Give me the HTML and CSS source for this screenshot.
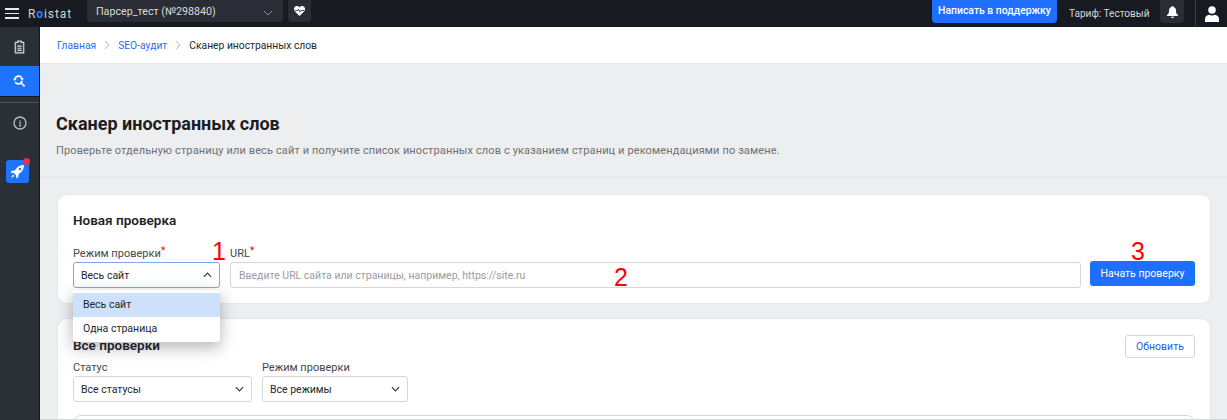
FILE: index.html
```html
<!DOCTYPE html>
<html>
    <head>
        <title>Сканер иностранных слов</title>
        <link rel="stylesheet" href="styles.css">
    </head>
<body>
    <header class="topbar">
        <div class="burger"><span></span><span></span><span></span></div>
        <div class="logo">R<span class="logo-o">o</span>istat</div>
        <div class="project">
            <span>Парсер_тест (№298840)</span>
            <svg class="project-arrow" width="10" height="6" viewBox="0 0 10 6"><path d="M1 1l4 4 4-4" fill="none" stroke="#8b8f96" stroke-width="1"/></svg>
        </div>
        <div class="health">
            <svg width="11" height="10" viewBox="0 0 12 11"><path d="M6 11L1 6C-.5 4.300-.3 1.800 1 .8 2.500-.4 4.800-.2 6 1.600 7.200-.2 9.500-.4 11 .8c1.300 1 1.500 3.500 0 5.200z" fill="#fff"/><path d="M1 5h3l1-1.500L6.500 6.500 7.500 5H11" fill="none" stroke="#2b2f36" stroke-width="1"/></svg>
        </div>
        <div class="topbar-right">
            <div class="support">Написать в поддержку</div>
            <div class="tariff">Тариф: Тестовый</div>
            <div class="bell">
                <svg width="11" height="12" viewBox="0 0 11 12"><path d="M5.500 0C6.200 0 6.500.5 6.500 1 8.500 1.500 9 3 9 5c0 2 .6 3 2 4v1H0V9c1.400-1 2-2 2-4 0-2 .5-3.500 2.500-4 0-.5.300-1 1-1zM4 10.700h3C7 11.500 6.300 12 5.500 12S4 11.500 4 10.700z" fill="#fff"/></svg>
            </div>
            <div class="user">
                <svg width="14" height="16" viewBox="0 0 14 16"><circle cx="7" cy="4" r="3.800" fill="#fff"/><path d="M0 16v-3c0-2.500 2-4 4-4.200 1.800 1 4.200 1 6 0 2 .2 4 1.700 4 4.200v3z" fill="#fff"/></svg>
            </div>
        </div>
    </header>
    <div class="layout">
        <nav class="sidebar">
            <div class="side-item">
                <svg width="11" height="14" viewBox="0 0 13 16"><path d="M4.500 2.500V1h4v1.500h3v12.500h-10V2.500z" fill="#3a3e45" stroke="#d5d7da" stroke-width="1.400"/><path d="M4 7h5M4 9.500h5M4 12h5" stroke="#d5d7da" stroke-width="1.300"/></svg>
            </div>
            <div class="side-item side-active">
                <svg width="13" height="12" viewBox="0 0 15 14"><path d="M2 4.500C2.800 2.500 4.500 1.200 6.500 1.200c1.500 0 2.800.6 3.700 1.700M10.500 7c-.7 2-2.200 3.300-4.200 3.300-1.700 0-3-.7-3.900-1.800" fill="none" stroke="#fff" stroke-width="2"/><path d="M0 4.500h4L2 7zM8.500 3.500h4L10.500 7z" fill="#fff"/><path d="M9.500 9.500l4 3.800" stroke="#fff" stroke-width="1.800"/></svg>
            </div>
            <div class="side-line"></div>
            <div class="side-item">
                <svg width="14" height="14" viewBox="0 0 15 15"><circle cx="7.500" cy="7.500" r="6.400" fill="none" stroke="#b9bbbe" stroke-width="1.500"/><path d="M6.500 7h1.200v3.500M6.300 10.700h2.600M7.500 4.200v1.400" fill="none" stroke="#b9bbbe" stroke-width="1.100"/></svg>
            </div>
            <div class="rocket">
                <svg width="15" height="15" viewBox="0 0 15 15"><path d="M14 1C10 1 7 2.800 5 6.200L1.500 7l-1 1.500 3.200.5 2.300 2.300.5 3.200 1.500-1 .8-3.500C12.200 8 14 5 14 1z" fill="#fff"/><path d="M3 10.500L1 14l3.500-2z" fill="#fff"/><circle cx="10" cy="5" r="1.200" fill="#1f74ff"/></svg>
                <span class="rocket-dot"></span>
            </div>
        </nav>
        <main class="main">
            <div class="crumbs">
                <a>Главная</a>
                <svg class="crumb-sep" width="6" height="10" viewBox="0 0 6 10"><path d="M1 1l4 4-4 4" fill="none" stroke="#b5b8bd"/></svg>
                <a>SEO-аудит</a>
                <svg class="crumb-sep" width="6" height="10" viewBox="0 0 6 10"><path d="M1 1l4 4-4 4" fill="none" stroke="#b5b8bd"/></svg>
                <span>Сканер иностранных слов</span>
            </div>
            <div class="page-head">
                <h1>Сканер иностранных слов</h1>
                <p>Проверьте отдельную страницу или весь сайт и получите список иностранных слов с указанием страниц и рекомендациями по замене.</p>
            </div>
            <section class="card card-new">
                <h2>Новая проверка</h2>
                <div class="form-row">
                    <div class="field field-mode">
                        <label>Режим проверки<i>*</i></label>
                        <div class="select select-open">
                            <span>Весь сайт</span>
                            <svg width="9" height="6" viewBox="0 0 10 6"><path d="M1 5l4-4 4 4" fill="none" stroke="#33373d" stroke-width="1.300"/></svg>
                        </div>
                        <div class="menu">
                            <div class="menu-item menu-current">Весь сайт</div>
                            <div class="menu-item">Одна страница</div>
                        </div>
                        <span class="mark mark-one">1</span>
                    </div>
                    <div class="field field-url">
                        <label>URL<i>*</i></label>
                        <div class="input">Введите URL сайта или страницы, например, https://site.ru</div>
                        <span class="mark mark-two">2</span>
                    </div>
                    <div class="btn-wrap">
                        <div class="btn-primary">Начать проверку</div>
                        <span class="mark mark-three">3</span>
                    </div>
                </div>
            </section>
            <section class="card card-list">
                <div class="list-head">
                    <h2>Все проверки</h2>
                    <div class="btn-outline">Обновить</div>
                </div>
                <div class="filters">
                    <div class="field filter-status">
                        <label>Статус</label>
                        <div class="select">
                            <span>Все статусы</span>
                            <svg width="9" height="6" viewBox="0 0 10 6"><path d="M1 1l4 4 4-4" fill="none" stroke="#33373d" stroke-width="1.300"/></svg>
                        </div>
                    </div>
                    <div class="field filter-mode">
                        <label>Режим проверки</label>
                        <div class="select">
                            <span>Все режимы</span>
                            <svg width="9" height="6" viewBox="0 0 10 6"><path d="M1 1l4 4 4-4" fill="none" stroke="#33373d" stroke-width="1.300"/></svg>
                        </div>
                    </div>
                </div>
                <div class="table-top"></div>
            </section>
        </main>
    </div>
</body>
</html>
```

FILE: styles.css
```css
* { box-sizing: border-box; }

html, body {
    margin: 0;
    height: 420px;
    overflow: hidden;
}

body {
    font-family: Roboto, "Liberation Sans", sans-serif;
    font-size: 10.500px;
    color: #23272d;
    background: #edeef0;
}

.topbar {
    height: 27px;
    background: #171a21;
    display: flex;
    align-items: center;
    color: #fff;
}

.burger {
    width: 14px;
    margin-left: 5px;
    display: flex;
    flex-direction: column;
    gap: 3px;
}

.burger span {
    height: 1.500px;
    background: #e8e9eb;
}

.logo {
    margin-left: 9px;
    width: 44px;
    font-size: 12px;
    letter-spacing: .9px;
    color: #d0d2d5;
}

.logo-o { color: #2a82f5; font-weight: 700; }

.project {
    width: 196px;
    height: 22px;
    margin: 0 0 5px 15px;
    padding: 5px 10px 0 9px;
    background: #2a2d35;
    border-radius: 0 0 4px 4px;
    display: flex;
    justify-content: space-between;
    font-size: 10.700px;
    color: #d9dadc;
}

.project-arrow { margin-top: 5px; }

.health {
    width: 23px;
    height: 22px;
    margin: 0 0 5px 5px;
    background: #2a2d35;
    border-radius: 0 0 4px 4px;
    display: flex;
    align-items: center;
    justify-content: center;
}

.topbar-right {
    margin-left: auto;
    display: flex;
    align-items: center;
    height: 27px;
}

.support {
    width: 125px;
    height: 23px;
    margin-bottom: 4px;
    background: #1f6fff;
    border-radius: 0 0 4px 4px;
    font-size: 10.400px;
    font-weight: 500;
    line-height: 22px;
    text-align: center;
    white-space: nowrap;
}

.tariff {
    margin-left: 12px;
    width: 91px;
    font-size: 10.100px;
    color: #d6d7d9;
    white-space: nowrap;
}

.bell {
    width: 24px;
    height: 23px;
    margin-bottom: 4px;
    background: #2a2d35;
    border-radius: 0 0 4px 4px;
    display: flex;
    align-items: center;
    justify-content: center;
}

.user {
    width: 32px;
    height: 27px;
    margin-left: 11px;
    border-left: 1px solid #3b3e45;
    display: flex;
    align-items: center;
    justify-content: center;
}

.layout {
    display: flex;
    height: 393px;
}

.sidebar {
    width: 40px;
    flex-shrink: 0;
    background: #2b2f36;
    border-right: 1px solid #15171c;
}

.side-item {
    height: 39px;
    display: flex;
    align-items: center;
    justify-content: center;
}

.side-active {
    background: #1f74ff;
    height: 30px;
    box-shadow: 0 1px 0 #15171c;
}

.side-line {
    height: 1px;
    margin-top: 6px;
    background: #50545b;
}

.rocket {
    position: relative;
    width: 23px;
    height: 23px;
    margin: 18px 0 0 6px;
    background: #1f74ff;
    border-radius: 3px;
    display: flex;
    align-items: center;
    justify-content: center;
}

.rocket-dot {
    position: absolute;
    top: -2px;
    right: -1px;
    width: 7px;
    height: 7px;
    border-radius: 50%;
    background: #e8323c;
}

.main {
    flex: 1;
    min-width: 0;
    overflow: hidden;
    border-bottom: 1px solid #d4d6d9;
}

.crumbs {
    height: 37px;
    padding-left: 17px;
    background: #fff;
    border-bottom: 1px solid #e3e4e6;
    display: flex;
    align-items: center;
    gap: 8px;
    font-size: 10.300px;
}

.crumbs a { color: #1f6fff; }

.page-head {
    padding: 50px 16px 0;
    height: 113px;
    border-bottom: 1px solid #e6e7e9;
}

h1 {
    margin: 0;
    font-size: 18px;
    line-height: 20px;
    font-weight: 700;
    color: #1a1d22;
}

.page-head p {
    margin: 10px 0 0;
    font-size: 11px;
    line-height: 14px;
    letter-spacing: .12px;
    color: #6e7072;
}

.card {
    margin: 17px 16px 0 17px;
    background: #fff;
    border-radius: 10px;
    border: 1px solid #e6e7e9;
    padding: 15px;
}

.card-new {
    height: 110px;
    padding-top: 16px;
}

h2 {
    margin: 0;
    font-size: 13.500px;
    line-height: 18px;
    font-weight: 600;
    color: #1f2328;
}

.form-row {
    display: flex;
    align-items: flex-end;
    margin-top: 18px;
}

.field { position: relative; }

.field label {
    display: block;
    font-size: 11px;
    line-height: 14px;
    margin-bottom: 1px;
    color: #44484e;
}

.field label i {
    color: #e51c23;
    font-style: normal;
    position: relative;
    top: -3px;
}

.field-mode { width: 147px; }

.field-url {
    flex: 1;
    margin: 0 9px 0 10px;
}

.select, .input {
    height: 26px;
    border: 1px solid #d4d6d9;
    border-radius: 3px;
    background: #fff;
    display: flex;
    align-items: center;
}

.select {
    justify-content: space-between;
    padding: 0 7px;
}

.select-open { border-color: #7fa6ea; }

.input {
    padding-left: 8px;
    color: #9a9da2;
}

.menu {
    position: absolute;
    top: 43px;
    left: 0;
    width: 147px;
    padding: 3px 0 2px;
    background: #fff;
    border-radius: 3px;
    box-shadow: 0 5px 16px rgba(30, 35, 45, .35);
    z-index: 2;
}

.menu-item {
    height: 23px;
    padding-left: 10px;
    line-height: 23px;
}

.menu-current {
    height: 24px;
    line-height: 24px;
    background: #cde1fb;
}

.mark {
    position: absolute;
    font-family: "Liberation Sans", sans-serif;
    font-size: 25px;
    line-height: 24px;
    color: #f00;
}

.mark-one { left: 139px; top: -8px; }
.mark-two { left: 384px; top: 18px; }
.mark-three { left: 41px; top: -22px; }

.btn-wrap { position: relative; }

.btn-primary {
    width: 105px;
    height: 25px;
    margin-bottom: 2px;
    background: #1f6fff;
    border-radius: 3px;
    color: #fff;
    line-height: 25px;
    text-align: center;
}

.card-list {
    height: 140px;
    margin-top: 14px;
    padding-top: 16px;
}

.list-head {
    display: flex;
    justify-content: space-between;
}

.list-head h2 { margin-top: 1px; }

.btn-outline {
    width: 70px;
    height: 23px;
    border: 1px solid #d4d6d9;
    border-radius: 3px;
    color: #1f5fe0;
    line-height: 21px;
    text-align: center;
}

.filters {
    display: flex;
    gap: 10px;
    margin-top: 3px;
}

.filter-status { width: 179px; }
.filter-mode { width: 146px; }

.table-top {
    height: 30px;
    margin-top: 13px;
    border: 1px solid #d4d6d9;
    border-radius: 8px 8px 0 0;
}
```
